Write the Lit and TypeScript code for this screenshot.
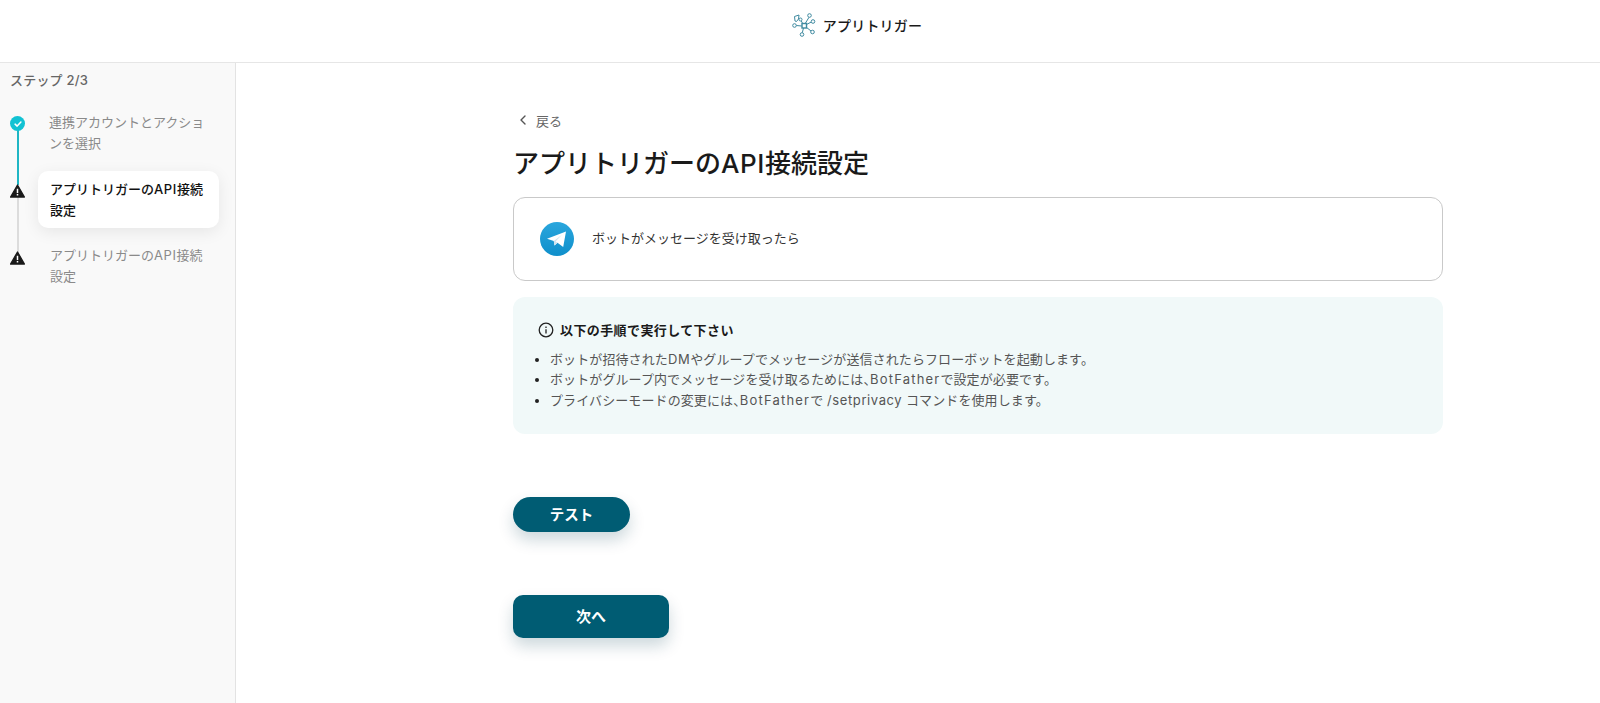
import { LitElement, html, css, svg } from "lit";
import { customElement } from "lit/decorators.js";

const warnIcon = html`<svg class="marker" viewBox="0 0 16 16" width="16" height="16">
  <path d="M8 1.6 15.4 14.4H.6Z" fill="#1a1a1a" stroke="#1a1a1a" stroke-width="1.4" stroke-linejoin="round" />
  <rect x="7.2" y="5.6" width="1.6" height="4.6" fill="#fff" />
  <rect x="7.2" y="11.2" width="1.6" height="1.6" fill="#fff" />
</svg>`;

const nodes = [
  [8.5, 6.5, 1.5],
  [17.5, 2.5, 1.8],
  [21, 8.5, 1.8],
  [2.5, 12.5, 1.8],
  [20.5, 19, 1.8],
  [10, 21.5, 1.8],
];

const logo = html`<svg viewBox="0 0 24 24" width="24" height="24" fill="none" stroke="#3f8aa0" stroke-width="1">
  <path d="M9 7.500 11 11M17 4.300 13.500 10M19.300 9 14.500 11.500M4.200 12.500 9.800 13M19 18 14 14M10.300 19.700 11.500 15" />
  <path d="M2.500 3.500 7 2 6.500 6 4.500 8.500 3 8Z" />
  <rect x="10" y="10.500" width="4.500" height="4.500" stroke-width="1.400" />
  ${nodes.map(([x, y, r]) => svg`<circle cx=${x} cy=${y} r=${r} fill="#fff" />`)}
</svg>`;

@customElement("app-root")
export class AppRoot extends LitElement {
  static styles = css`
    :host {
      display: block;
      height: 703px;
      overflow: hidden;
      background: #fff;
      font-family: "Inter", "Noto Sans CJK JP", sans-serif;
      color: #222;
    }

    .en {
      letter-spacing: 0.6px;
    }

    .en.wide {
      letter-spacing: 1.2px;
    }

    .comma {
      font-feature-settings: "halt";
    }

    .topbar {
      height: 63px;
      box-sizing: border-box;
      border-bottom: 1px solid #e6e6e6;
      display: flex;
      justify-content: center;
      align-items: center;
      gap: 7px;
      padding-bottom: 13px;
      padding-left: 114px;
      font-size: 14px;
      font-weight: 500;
      letter-spacing: 0.2px;
      color: #1a1a1a;
    }

    .layout {
      display: flex;
      height: 640px;
    }

    .sidebar {
      width: 236px;
      box-sizing: border-box;
      flex: none;
      background: #f9f9f9;
      border-right: 1px solid #e3e3e3;
      padding: 9px 16px 0 10px;
    }

    .step-label {
      font-size: 13px;
      font-weight: 500;
      line-height: 16px;
      color: #666;
      letter-spacing: 0.2px;
      margin-bottom: 19px;
    }

    .steps {
      display: flex;
      flex-direction: column;
    }

    .step {
      position: relative;
      display: flex;
      align-items: flex-start;
      gap: 25px;
    }

    .rail {
      flex: none;
      width: 15px;
      display: flex;
      justify-content: center;
      padding-top: 8px;
    }

    .marker {
      position: relative;
      z-index: 1;
      display: block;
    }

    .check {
      width: 15px;
      height: 15px;
      border-radius: 50%;
      background: #12c2d3;
      display: flex;
      align-items: center;
      justify-content: center;
      position: relative;
      z-index: 1;
    }

    .line {
      position: absolute;
      left: 6.500px;
      width: 2px;
    }

    .line.done {
      top: 20px;
      height: 58px;
      background: #1fb6c4;
    }

    .line.todo {
      top: 26px;
      height: 56px;
      background: #dcdcdc;
    }

    .step-text {
      font-size: 13px;
      line-height: 21px;
      color: #8a8a8a;
      width: 165px;
    }

    .step.first {
      height: 64px;
    }

    .step.first .step-text {
      padding-top: 5px;
      margin-left: -1px;
    }

    .step.first .rail {
      padding-top: 9px;
    }

    .step.active {
      height: 77px;
    }

    .step.active .rail {
      padding-top: 12px;
    }

    .step.active .step-text {
      margin-left: -12px;
      width: 184px;
      box-sizing: border-box;
      height: 57px;
      padding: 8px 12px 0 12px;
      background: #fff;
      border-radius: 10px;
      box-shadow: 0 4px 16px rgba(0, 0, 0, 0.08);
      color: #111;
      font-weight: 500;
    }

    .step.last .rail {
      padding-top: 2px;
    }

    .step.last .step-text {
      margin-top: -3px;
    }

    .main {
      flex: 1;
      box-sizing: border-box;
      padding: 47px 0 0 277px;
    }

    .content {
      width: 930px;
    }

    .back {
      display: flex;
      align-items: center;
      gap: 8px;
      height: 20px;
      padding-left: 5px;
      font-size: 13px;
      color: #666;
    }

    h1 {
      margin: 14px 0 0;
      font-size: 26px;
      line-height: 40px;
      font-weight: 500;
      color: #1a1a1a;
    }

    .trigger {
      margin-top: 13px;
      height: 84px;
      box-sizing: border-box;
      border: 1px solid #c9c9c9;
      border-radius: 12px;
      display: flex;
      align-items: center;
      gap: 18px;
      padding-left: 26px;
      font-size: 13px;
      color: #333;
    }

    .trigger span {
      padding-bottom: 3px;
    }

    .info {
      margin-top: 16px;
      height: 137px;
      box-sizing: border-box;
      background: #f1f9f9;
      border-radius: 12px;
      padding: 23px 24px 0 25px;
    }

    .info-title {
      display: flex;
      align-items: center;
      gap: 6px;
      font-size: 13px;
      font-weight: 600;
      line-height: 20px;
      letter-spacing: 0.4px;
      color: #1a1a1a;
    }

    ul {
      margin: 9px 0 0;
      padding: 0 0 0 12px;
      font-size: 13px;
      line-height: 20.400px;
      letter-spacing: 0.1px;
      color: #555;
    }

    li::marker {
      color: #222;
    }

    button {
      display: block;
      border: none;
      background: #005c73;
      color: #fff;
      font-family: inherit;
      font-weight: 600;
      padding: 0 0 2px;
      box-shadow: 0 8px 16px rgba(0, 60, 80, 0.2);
    }

    .test {
      margin-top: 63px;
      width: 117px;
      height: 35px;
      border-radius: 18px;
      font-size: 14.500px;
    }

    .next {
      margin-top: 63px;
      width: 156px;
      height: 43px;
      border-radius: 10px;
      font-size: 15px;
    }
  `;

  render() {
    return html`
      <div class="topbar">${logo}<span>アプリトリガー</span></div>
      <div class="layout">
        <aside class="sidebar">
          <div class="step-label">ステップ 2/3</div>
          <div class="steps">
            <div class="step first">
              <span class="line done"></span>
              <div class="rail">
                <span class="check">
                  <svg viewBox="0 0 12 12" width="10" height="10" fill="none" stroke="#fff" stroke-width="1.800" stroke-linecap="round" stroke-linejoin="round">
                    <path d="M2.500 6.200 5 8.500 9.500 3.700" />
                  </svg>
                </span>
              </div>
              <div class="step-text">連携アカウントとアクションを選択</div>
            </div>
            <div class="step active">
              <span class="line todo"></span>
              <div class="rail">${warnIcon}</div>
              <div class="step-text">アプリトリガーの<span class="en">API</span>接続<br />設定</div>
            </div>
            <div class="step last">
              <div class="rail">${warnIcon}</div>
              <div class="step-text">アプリトリガーの<span class="en">API</span>接続<br />設定</div>
            </div>
          </div>
        </aside>
        <main class="main">
          <div class="content">
            <div class="back">
              <svg viewBox="0 0 10 12" width="10" height="12" fill="none" stroke="#555" stroke-width="1.400" stroke-linecap="round" stroke-linejoin="round">
                <path d="M7 2 3 6 7 10" />
              </svg>
              <span>戻る</span>
            </div>
            <h1>アプリトリガーの<span class="en">API</span>接続設定</h1>
            <div class="trigger">
              <svg viewBox="0 0 34 34" width="34" height="34">
                <defs>
                  <linearGradient id="tg" x1="0" y1="0" x2="0" y2="1">
                    <stop offset="0" stop-color="#2aa6dd" />
                    <stop offset="1" stop-color="#0f8fcb" />
                  </linearGradient>
                </defs>
                <circle cx="17" cy="17" r="17" fill="url(#tg)" />
                <path d="M7 16.800 26 9.600 23.200 25 17.500 20.800 14.500 23.600 13.800 19Z" fill="#fff" />
                <path d="M13.800 19 14.500 23.600 17.500 20.800 15.500 19.400 22 12.800Z" fill="#cfe3ef" />
              </svg>
              <span>ボットがメッセージを受け取ったら</span>
            </div>
            <div class="info">
              <div class="info-title">
                <svg viewBox="0 0 16 16" width="16" height="16" fill="none" stroke="#222" stroke-width="1.300">
                  <circle cx="8" cy="8" r="6.800" />
                  <path d="M8 7.200V11.500M8 4.500V5.900" />
                </svg>
                <span>以下の手順で実行して下さい</span>
              </div>
              <ul>
                <li>ボットが招待された<span class="en">DM</span>やグループでメッセージが送信されたらフローボットを起動します。</li>
                <li>ボットがグループ内でメッセージを受け取るためには<span class="comma">、</span><span class="en wide">BotFather</span>で設定が必要です。</li>
                <li>プライバシーモードの変更には<span class="comma">、</span><span class="en wide">BotFather</span>で <span class="en">/setprivacy</span> コマンドを使用します。</li>
              </ul>
            </div>
            <button class="test">テスト</button>
            <button class="next">次へ</button>
          </div>
        </main>
      </div>
    `;
  }
}
